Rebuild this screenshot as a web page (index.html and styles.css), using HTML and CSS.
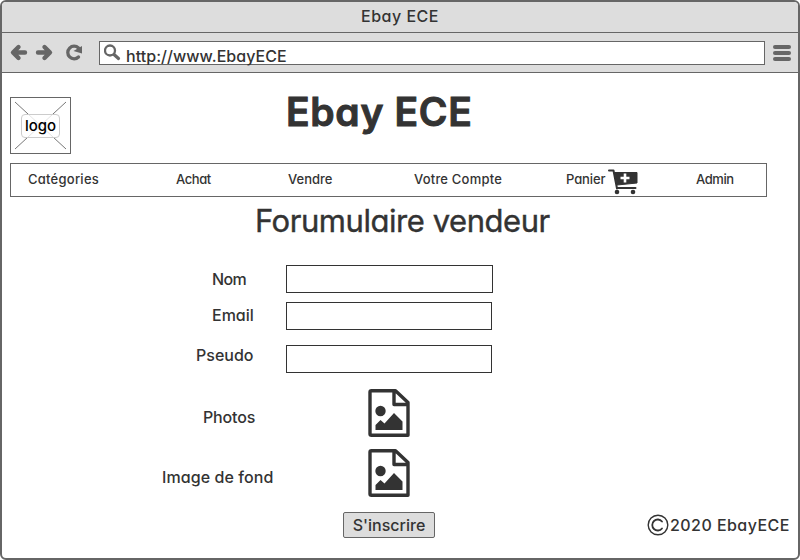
FILE: index.html
```html
<!DOCTYPE html>
<html lang="fr">
<head>
<meta charset="utf-8">
<title>Ebay ECE</title>
<link rel="stylesheet" href="styles.css">
</head>
<body>
<div class="window">
  <div class="titlebar"><span class="window-title">Ebay ECE</span></div>
  <div class="toolbar">
    <svg class="tools" width="84" height="38" viewBox="2 33 84 38">
      <g fill="none" stroke="#666" stroke-width="4.400" stroke-linecap="round" stroke-linejoin="round">
        <path d="M25 52.500H14M18.500 47l-5.500 5.500 5.500 5.500"/>
        <path d="M38 52.500H49M44.500 47l5.500 5.500-5.500 5.500"/>
        <path d="M78.500 57a6.300 6.300 0 1 1 0-9" stroke-width="3.300"/>
      </g>
      <path d="M82 46v7.500l-8.500-2.500z" fill="#666"/>
    </svg>
    <div class="address">
      <svg width="18" height="18" viewBox="0 0 18 18"><g fill="none" stroke="#666"><circle cx="6" cy="6.500" r="5" stroke-width="2.300"/><path d="M10 10.500l4.500 4" stroke-width="3.200" stroke-linecap="round"/></g></svg>
      <span class="url">http://www.EbayECE</span>
    </div>
    <div class="menu"><i></i><i></i><i></i></div>
  </div>
  <main>
    <header>
      <div class="logo">
        <svg width="59" height="55" viewBox="0 0 59 55"><path d="M4 4l51 47M55 4L4 51" stroke="#777"/></svg>
        <span class="logo-text">logo</span>
      </div>
      <h1>Ebay ECE</h1>
    </header>
    <nav>
      <a class="n1">Catégories</a><a class="n2">Achat</a><a class="n3">Vendre</a><a class="n4">Votre Compte</a>
      <a class="n5">Panier</a>
      <svg class="cart" width="32" height="28" viewBox="0 0 32 28">
        <path d="M1 1.500H5.500L9 19.500M9 19H27.500" fill="none" stroke="#333" stroke-width="2" stroke-linecap="round" stroke-linejoin="round"/>
        <path d="M6.500 3.500H29V14L9 16z" fill="#333" stroke="#333" stroke-linejoin="round"/>
        <path d="M17 4.500v9M12.500 9h9" stroke="#fff" stroke-width="2.600"/>
        <circle cx="9" cy="23" r="2.300" fill="#333"/><circle cx="25" cy="23" r="2.300" fill="#333"/>
      </svg>
      <a class="n6">Admin</a>
    </nav>
    <h2>Forumulaire vendeur</h2>
    <form>
      <div class="row nom"><label>Nom</label><input type="text"></div>
      <div class="row email"><label>Email</label><input type="text"></div>
      <div class="row pseudo"><label>Pseudo</label><input type="text"></div>
      <div class="row photos"><label>Photos</label>
        <svg class="file" width="42" height="48" viewBox="0 0 42 48"><path d="M3.500 1.700H27.500L40 13.500V46.300H3.500Q2 46.300 2 45V3Q2 1.700 3.500 1.700zM26 1.700V15.500H40" fill="none" stroke="#333" stroke-width="3.400" stroke-linejoin="round"/><circle cx="12.500" cy="22" r="5.200" fill="#333"/><path d="M7.500 41V36l5-5 4 3.500L26 24l8.500 8.500V41z" fill="#333"/></svg>
      </div>
      <div class="row fond"><label>Image de fond</label>
        <svg class="file" width="42" height="48" viewBox="0 0 42 48"><path d="M3.500 1.700H27.500L40 13.500V46.300H3.500Q2 46.300 2 45V3Q2 1.700 3.500 1.700zM26 1.700V15.500H40" fill="none" stroke="#333" stroke-width="3.400" stroke-linejoin="round"/><circle cx="12.500" cy="22" r="5.200" fill="#333"/><path d="M7.500 41V36l5-5 4 3.500L26 24l8.500 8.500V41z" fill="#333"/></svg>
      </div>
      <div class="submit-row">
        <button type="button">S'inscrire</button>
        <div class="copyright">
          <svg width="22" height="22" viewBox="0 0 22 22"><g fill="none" stroke="#333" stroke-linecap="round"><circle cx="11" cy="11" r="9.800" stroke-width="1.400"/><path d="M15 7.500a5.500 5.500 0 1 0 0 7" stroke-width="1.800"/></g></svg>
          <span>2020 EbayECE</span>
        </div>
      </div>
    </form>
  </main>
</div>
</body>
</html>
```
FILE: styles.css
```css
* { box-sizing: border-box; }
body { margin: 0; background: #fff; color: #333; font: 500 16px/20px Inter, "Open Sans", sans-serif; font-feature-settings: "cv11" 1; }
svg { display: block; flex: none; }
.window { width: 800px; height: 560px; border: 2px solid #666; border-radius: 6px; overflow: hidden; background: #fff; }
.titlebar { height: 31px; padding-top: 4px; background: #ddd; border-bottom: 1px solid #666; text-align: center; }
.window-title { letter-spacing: .5px; }
.toolbar { display: flex; height: 40px; background: #ddd; border-bottom: 1px solid #666; }
.address { display: flex; width: 666px; height: 24px; margin: 8px 0 0 13px; padding: 2px 0 0 4px; background: #fff; border: 1px solid #666; }
.url { margin-left: 4px; padding-top: 2px; letter-spacing: .05px; white-space: nowrap; }
.menu { width: 18px; margin: 12px 0 0 8px; }
.menu i { display: block; height: 4px; margin-bottom: 2px; border-radius: 2px; background: #666; }
main { padding-left: 8px; }
header { display: flex; padding-top: 24px; height: 90px; }
.logo { display: grid; width: 61px; height: 57px; border: 1px solid #666; place-items: center; }
.logo svg, .logo-text { grid-area: 1 / 1; }
.logo-text { width: 39px; height: 24px; border: 1px solid #ccc; border-radius: 4px; background: rgba(255,255,255,.8); color: #000; font-size: 15px; line-height: 22px; text-align: center; z-index: 1; }
h1 { margin: -9px 0 0 215px; font-size: 39px; line-height: 48px; font-weight: 600; letter-spacing: .7px; -webkit-text-stroke: 1px #333; }
nav { display: flex; width: 757px; height: 34px; border: 1px solid #666; font-size: 13px; line-height: 30px; white-space: nowrap; }
nav a { flex: none; }
.n1 { width: 148px; margin-left: 17px; letter-spacing: .25px; }
.n2 { width: 112px; letter-spacing: -.4px; }
.n3 { width: 126px; }
.n4 { width: 152px; letter-spacing: .2px; }
.n5 { width: 42px; letter-spacing: -.1px; }
.cart { margin-top: 5px; }
.n6 { margin-left: 56px; letter-spacing: -.4px; }
h2 { margin: 4px 0 0 245px; font-size: 31px; line-height: 40px; font-weight: 400; letter-spacing: -.45px; white-space: nowrap; -webkit-text-stroke: .4px #333; }
form { padding-top: 24px; }
.row { display: flex; }
.row label { width: 114px; flex: none; white-space: nowrap; }
input { width: 206px; height: 28px; padding: 0 4px; border: 1px solid #333; border-radius: 0; background: #fff; font: inherit; }
.nom { height: 37px; padding-left: 201px; }
.nom label, .email label { width: 75px; padding-top: 4px; text-indent: 1px; }
.nom label { letter-spacing: -.6px; }
.email label { padding-top: 3px; }
.nom input { width: 207px; }
.email { height: 43px; padding-left: 201px; }
.pseudo { height: 44px; padding-left: 186px; }
.pseudo label { width: 90px; }
.photos { height: 60px; padding-left: 193px; }
.photos label { width: 165px; padding-top: 18px; letter-spacing: -.15px; }
.fond { height: 63px; padding-left: 152px; }
.fond label { width: 206px; padding-top: 18px; letter-spacing: .08px; }
.submit-row { display: flex; padding-left: 333px; }
button { width: 92px; height: 26px; padding: 0; border: 1px solid #666; border-radius: 2px; background: #ddd; color: #333; font: inherit; font-feature-settings: inherit; line-height: 22px; }
.copyright { display: flex; margin: 2px 0 0 212px; white-space: nowrap; }
.copyright span { margin-left: 1px; padding-top: 1px; letter-spacing: .45px; }
```
